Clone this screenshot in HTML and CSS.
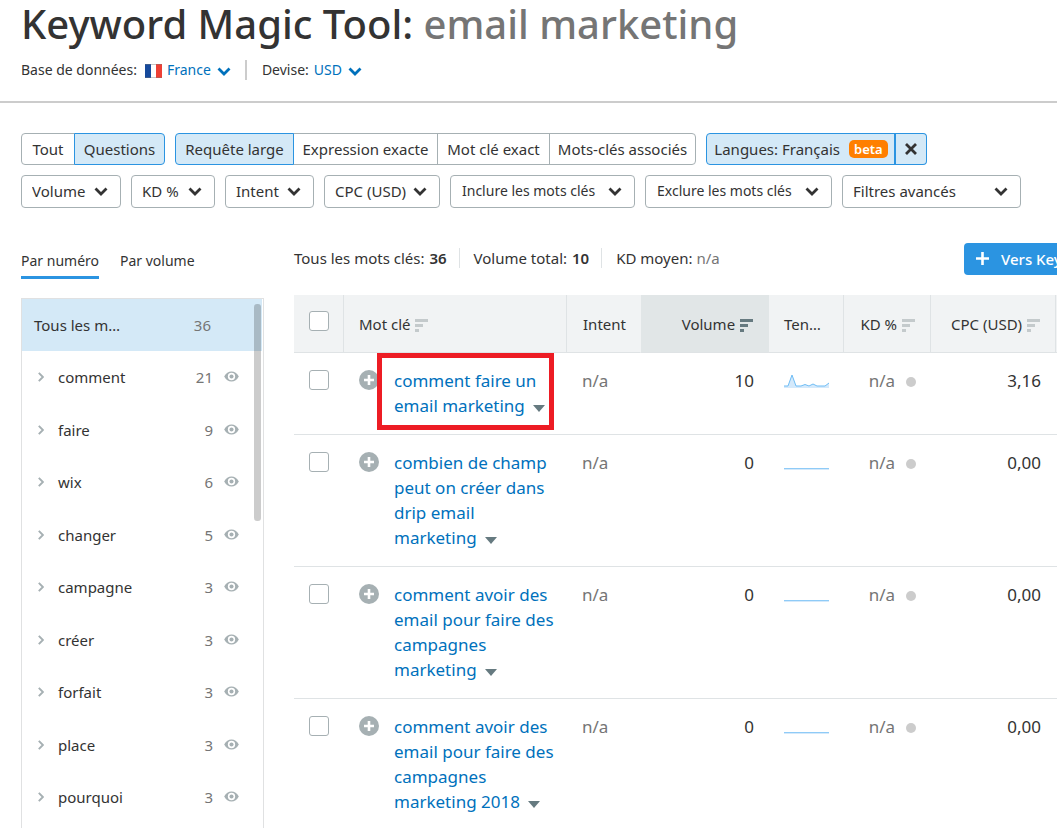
FILE: index.html
```
<!DOCTYPE html>
<html lang="fr">
<head>
<meta charset="utf-8">
<title>Keyword Magic Tool: email marketing</title>
<link rel="stylesheet" href="styles.css">
</head>
<body>
<svg class="defs" aria-hidden="true">
  <symbol id="chevron" viewBox="0 0 14 9"><path d="M1.500 1.500 7 7l5.500-5.500" fill="none" stroke="currentColor" stroke-width="2.800"/></symbol>
  <symbol id="expand" viewBox="0 0 6 10"><path d="M.8.8 4.900 5 .8 9.200" fill="none" stroke="currentColor" stroke-width="1.900"/></symbol>
  <symbol id="eye" viewBox="0 0 16 12"><path fill="currentColor" fill-rule="evenodd" d="M0 6Q3 .5 8 .5T16 6Q13 11.500 8 11.500T0 6ZM8 2a4 4 0 1 0 0 8 4 4 0 0 0 0-8Z"/><circle cx="8" cy="6" r="2.200" fill="currentColor"/></symbol>
  <symbol id="sort" viewBox="0 0 13 13"><path fill="currentColor" d="M0 0h13v3H0zM0 5h8v3H0zM0 10h4v3H0z"/></symbol>
  <symbol id="add" viewBox="0 0 20 20"><circle cx="10" cy="10" r="10" fill="#a6b0b3"/><path d="M10 5v10M5 10h10" stroke="#fff" stroke-width="2.600"/></symbol>
  <symbol id="caret" viewBox="0 0 12 7"><path d="M0 0h12L6 7z" fill="#667a80"/></symbol>
  <symbol id="flat" viewBox="0 0 45 14"><path d="M0 12h45v2H0z" fill="#d4e9fb"/><path d="M0 12.500h45" stroke="#8fcbf7"/></symbol>
</svg>

<header class="header">
  <h1 class="title">Keyword Magic Tool: <span class="query">email marketing</span></h1>
  <div class="meta">
    <span>Base de données:</span>
    <svg class="flag" viewBox="0 0 17 14"><path fill="#164a9c" d="M0 0h6v14H0z"/><path fill="#fff" d="M6 0h5v14H6z"/><path fill="#ee4035" d="M11 0h6v14h-6z"/><path d="M0 .5h17M0 13.500h17" stroke="#777" stroke-opacity=".4"/></svg>
    <button class="pick">France <svg class="chevron"><use href="#chevron"/></svg></button>
    <span class="meta-next">Devise:</span>
    <button class="pick">USD <svg class="chevron"><use href="#chevron"/></svg></button>
  </div>
</header>

<main class="page">
  <div class="filters">
    <div class="group">
      <button class="seg seg-all">Tout</button><button class="seg seg-questions is-on">Questions</button>
    </div>
    <div class="group">
      <button class="seg seg-broad is-on">Requête large</button><button class="seg seg-phrase">Expression exacte</button><button class="seg seg-exact">Mot clé exact</button><button class="seg seg-related">Mots-clés associés</button>
    </div>
    <div class="group">
      <button class="seg seg-lang is-on">Langues: Français <span class="beta">beta</span></button><button class="seg seg-close is-on" aria-label="Supprimer"><svg class="cross" viewBox="0 0 12 12"><path d="m1 1 10 10M11 1 1 11" stroke="currentColor" stroke-width="2.800"/></svg></button>
    </div>
  </div>
  <div class="filters">
    <label class="drop drop-volume"><select aria-label="Volume"><option>Volume</option></select><svg class="chevron"><use href="#chevron"/></svg></label>
    <label class="drop drop-kd"><select aria-label="KD %"><option>KD %</option></select><svg class="chevron"><use href="#chevron"/></svg></label>
    <label class="drop drop-intent"><select aria-label="Intent"><option>Intent</option></select><svg class="chevron"><use href="#chevron"/></svg></label>
    <label class="drop drop-cpc"><select aria-label="CPC (USD)"><option>CPC (USD)</option></select><svg class="chevron"><use href="#chevron"/></svg></label>
    <label class="drop drop-include"><select aria-label="Inclure les mots clés"><option>Inclure les mots clés</option></select><svg class="chevron"><use href="#chevron"/></svg></label>
    <label class="drop drop-exclude"><select aria-label="Exclure les mots clés"><option>Exclure les mots clés</option></select><svg class="chevron"><use href="#chevron"/></svg></label>
    <label class="drop drop-more"><select aria-label="Filtres avancés"><option>Filtres avancés</option></select><svg class="chevron"><use href="#chevron"/></svg></label>
  </div>

  <div class="content">
    <aside class="side">
      <div class="tabs"><button class="tab is-current">Par numéro</button><button class="tab">Par volume</button></div>
      <div class="panel">
        <div class="scrollbar"></div>
        <div class="total"><span>Tous les m…</span><span class="count">36</span></div>
        <ul class="list">
          <li class="item"><svg class="expand"><use href="#expand"/></svg><span>comment</span><span class="count">21</span><svg class="eye"><use href="#eye"/></svg></li>
          <li class="item"><svg class="expand"><use href="#expand"/></svg><span>faire</span><span class="count">9</span><svg class="eye"><use href="#eye"/></svg></li>
          <li class="item"><svg class="expand"><use href="#expand"/></svg><span>wix</span><span class="count">6</span><svg class="eye"><use href="#eye"/></svg></li>
          <li class="item"><svg class="expand"><use href="#expand"/></svg><span>changer</span><span class="count">5</span><svg class="eye"><use href="#eye"/></svg></li>
          <li class="item"><svg class="expand"><use href="#expand"/></svg><span>campagne</span><span class="count">3</span><svg class="eye"><use href="#eye"/></svg></li>
          <li class="item"><svg class="expand"><use href="#expand"/></svg><span>créer</span><span class="count">3</span><svg class="eye"><use href="#eye"/></svg></li>
          <li class="item"><svg class="expand"><use href="#expand"/></svg><span>forfait</span><span class="count">3</span><svg class="eye"><use href="#eye"/></svg></li>
          <li class="item"><svg class="expand"><use href="#expand"/></svg><span>place</span><span class="count">3</span><svg class="eye"><use href="#eye"/></svg></li>
          <li class="item"><svg class="expand"><use href="#expand"/></svg><span>pourquoi</span><span class="count">3</span><svg class="eye"><use href="#eye"/></svg></li>
        </ul>
      </div>
    </aside>

    <section class="results">
      <div class="summary">
        <div class="stats">
          <span class="stat">Tous les mots clés: <b>36</b></span>
          <span class="stat">Volume total: <b>10</b></span>
          <span class="stat">KD moyen: <span class="muted">n/a</span></span>
        </div>
        <button class="send"><svg class="plus" viewBox="0 0 13 13"><path d="M6.500 0v13M0 6.500h13" stroke="currentColor" stroke-width="2.600"/></svg>Vers Keyword Manager</button>
      </div>
      <table class="table">
        <colgroup><col class="c-check"><col class="c-key"><col class="c-intent"><col class="c-volume"><col class="c-trend"><col class="c-kd"><col class="c-cpc"><col class="c-more"></colgroup>
        <thead>
          <tr>
            <th><input type="checkbox" class="check" aria-label="Tout sélectionner"></th>
            <th>Mot clé <svg class="sort"><use href="#sort"/></svg></th>
            <th class="center">Intent</th>
            <th class="right sorted">Volume <svg class="sort"><use href="#sort"/></svg></th>
            <th>Ten…</th>
            <th class="right tight">KD % <svg class="sort"><use href="#sort"/></svg></th>
            <th class="right">CPC (USD) <svg class="sort"><use href="#sort"/></svg></th>
            <th></th>
          </tr>
        </thead>
        <tbody>
          <tr>
            <td><input type="checkbox" class="check" aria-label="comment faire un email marketing"></td>
            <td class="key-cell"><div class="key"><svg class="add"><use href="#add"/></svg><a href="#" class="link">comment faire un email marketing<svg class="caret"><use href="#caret"/></svg></a></div><div class="frame"></div></td>
            <td class="muted">n/a</td><td class="right">10</td>
            <td><svg class="trend" viewBox="0 0 45 14"><path d="M0 12h4L8 1l4 11h5l4-1.500L25 12l4-2 4 2h8l4-3v5H0z" fill="#d4e9fb"/><path d="M0 12h4L8 1l4 11h5l4-1.500L25 12l4-2 4 2h8l4-3" fill="none" stroke="#6fbdf5"/></svg></td>
            <td class="right muted tight">n/a<span class="dot"></span></td><td class="right">3,16</td><td></td>
          </tr>
          <tr>
            <td><input type="checkbox" class="check" aria-label="combien de champ peut on créer dans drip email marketing"></td>
            <td><div class="key"><svg class="add"><use href="#add"/></svg><a href="#" class="link">combien de champ peut on créer dans drip email marketing<svg class="caret"><use href="#caret"/></svg></a></div></td>
            <td class="muted">n/a</td><td class="right">0</td><td><svg class="trend"><use href="#flat"/></svg></td>
            <td class="right muted tight">n/a<span class="dot"></span></td><td class="right">0,00</td><td></td>
          </tr>
          <tr>
            <td><input type="checkbox" class="check" aria-label="comment avoir des email pour faire des campagnes marketing"></td>
            <td><div class="key"><svg class="add"><use href="#add"/></svg><a href="#" class="link">comment avoir des email pour faire des campagnes marketing<svg class="caret"><use href="#caret"/></svg></a></div></td>
            <td class="muted">n/a</td><td class="right">0</td><td><svg class="trend"><use href="#flat"/></svg></td>
            <td class="right muted tight">n/a<span class="dot"></span></td><td class="right">0,00</td><td></td>
          </tr>
          <tr>
            <td><input type="checkbox" class="check" aria-label="comment avoir des email pour faire des campagnes marketing 2018"></td>
            <td><div class="key"><svg class="add"><use href="#add"/></svg><a href="#" class="link">comment avoir des email pour faire des campagnes marketing 2018<svg class="caret"><use href="#caret"/></svg></a></div></td>
            <td class="muted">n/a</td><td class="right">0</td><td><svg class="trend"><use href="#flat"/></svg></td>
            <td class="right muted tight">n/a<span class="dot"></span></td><td class="right">0,00</td><td></td>
          </tr>
        </tbody>
      </table>
    </section>
  </div>
</main>
</body>
</html>
```
FILE: styles.css
```
* { box-sizing: border-box; }
html { overflow: hidden; }
body {
  margin: 0;
  background: #fff;
  color: #333;
  font: 15px/20px "Noto Sans", "Open Sans", sans-serif;
}
button, select { font: inherit; color: inherit; margin: 0; }
button { border: 0; padding: 0; background: none; cursor: pointer; white-space: nowrap; }
svg { flex: none; }
.defs { display: none; }
.muted { color: #757575; }
.right { text-align: right; }
.center { text-align: center; }

.header { padding: 0 21px 21px; border-bottom: 2px solid #ccc; }
.title { margin: 0; font-size: 40px; line-height: 48px; font-weight: 500; white-space: nowrap; }
.query { color: #757575; }
.meta { display: flex; align-items: center; height: 20px; margin-top: 12px; font-size: 14px; white-space: nowrap; }
.flag { width: 17px; height: 14px; margin: 1px 5px 0 8px; }
.pick { color: #0071bc; display: flex; align-items: center; gap: 6px; }
.chevron { width: 14px; height: 9px; }
.pick .chevron { margin-top: 3px; }
.meta-next { margin: 0 5px 0 14px; padding-left: 15px; border-left: 2px solid #ccc; }

.page { padding: 30px 0 0 21px; }
.filters { display: flex; gap: 10px; margin-bottom: 10px; }
.group { display: flex; }
.seg {
  height: 32px;
  padding-bottom: 1px;
  border: 1px solid #a6b0b3;
  display: flex;
  align-items: center;
  justify-content: center;
  margin-left: -1px;
}
.seg:first-child { border-radius: 4px 0 0 4px; margin-left: 0; }
.seg:last-child { border-radius: 0 4px 4px 0; }
.seg.is-on { background: #d4e9f7; border-color: #2b94e1; z-index: 1; }
.seg-all { width: 54px; }
.seg-questions { width: 91px; }
.seg-broad { width: 119px; }
.seg-phrase { width: 145px; }
.seg-exact { width: 113px; }
.seg-related { width: 147px; }
.seg-lang { width: 190px; gap: 9px; }
.seg.seg-close { width: 33px; margin-left: -1px; border-left-width: 2px; margin-left: -2px; }
.cross { width: 12px; height: 12px; }
.beta { background: #ff7f00; color: #fff; font-weight: 600; font-size: 13px; line-height: 18px; border-radius: 5px; padding: 0 5px; }

.drop { display: grid; align-items: center; }
.drop select {
  grid-area: 1 / 1;
  width: 100%;
  height: 33px;
  padding: 0 0 2px 10px;
  border: 1px solid #a6b0b3;
  border-radius: 4px;
  background: #fff;
  appearance: none;
}
.drop .chevron { grid-area: 1 / 1; justify-self: end; margin-right: 13px; pointer-events: none; }
.drop-volume { width: 100px; }
.drop-kd { width: 84px; }
.drop-intent { width: 89px; }
.drop-cpc { width: 116px; }
.drop-include { width: 185px; }
.drop-exclude { width: 187px; }
.drop-more { width: 179px; }
.drop-include select, .drop-exclude select { font-size: 14px; padding-left: 11px; }

.content { display: flex; align-items: flex-start; gap: 30px; padding-top: 25px; }
.side { flex: none; width: 243px; padding-top: 8px; }
.tabs { display: flex; gap: 21px; font-size: 14px; }
.tab { padding: 0 0 6px; height: 28px; border-bottom: 3px solid transparent; }
.tab.is-current { border-color: #2b94e1; }
.panel { position: relative; margin-top: 19px; border: 1px solid #e0e1e2; padding-bottom: 32px; }
.scrollbar { position: absolute; top: 5px; right: 2px; width: 7px; height: 217px; border-radius: 3px; background: rgba(0, 0, 0, .2); }
.total { display: flex; justify-content: space-between; align-items: center; height: 52px; margin-right: 1px; padding: 0 51px 0 12px; background: #d4e9f7; }
.count { color: #757575; }
.list { list-style: none; margin: 0; padding: 0; }
.item { display: flex; align-items: center; height: 53px; padding: 0 24px 1px 16px; }
.item:nth-child(even) { height: 52px; }
.item .count { margin-left: auto; }
.expand { width: 6px; height: 10px; margin-right: 14px; color: #a6b0b3; }
.eye { width: 15px; height: 11px; margin: 0 0 1px 11px; color: #a6b0b3; }

.results { flex: 1; min-width: 0; }
.summary { display: flex; height: 32px; margin-bottom: 20px; }
.stats { display: flex; align-items: center; flex: none; width: 670px; padding-bottom: 2px; white-space: nowrap; }
.stat + .stat { margin-left: 12px; padding-left: 14px; border-left: 1px solid #dfe3e5; }
.stat b { margin-left: 1px; font-weight: 600; }
.send { display: flex; align-items: center; gap: 12px; flex: none; padding: 0 12px 1px; border-radius: 4px; background: #2b94e1; color: #fff; font-weight: 500; }
.plus { width: 13px; height: 13px; }

.table { table-layout: fixed; width: 860px; border-collapse: separate; border-spacing: 0; }
.c-check { width: 50px; }
.c-key { width: 223px; }
.c-intent { width: 74px; }
.c-volume { width: 128px; }
.c-trend { width: 75px; }
.c-kd { width: 87px; }
.c-cpc { width: 125px; }
th {
  height: 58px;
  padding: 1px 15px 0;
  background: #f1f3f4;
  border-right: 1px solid #dfe3e5;
  border-bottom: 1px solid #dfe3e5;
  font-weight: 400;
  text-align: left;
  white-space: nowrap;
}
th.center { text-align: center; padding: 0 0 0 2px; }
th.right { text-align: right; }
th.sorted { background: #e1e6e7; border-right-color: #e1e6e7; }
th:nth-child(3) { border-right-color: #f1f3f4; }
.sort { width: 13px; height: 13px; margin-left: 1px; color: #c4cacc; vertical-align: -2px; }
.sorted .sort { color: #667a80; }
td { padding: 15px 15px 16px; border-bottom: 1px solid #dfe3e5; vertical-align: top; font-size: 17px; line-height: 25px; }
.check { appearance: none; display: block; width: 20px; height: 20px; margin: 0; border: 1px solid #a6b0b3; border-radius: 3px; background: #fff; }
th .check { margin-bottom: 6px; }
td .check { margin-top: 2px; }
.key { display: flex; gap: 15px; }
.add { width: 20px; height: 20px; margin-top: 2px; }
.link { color: #0071bc; text-decoration: none; width: 161px; flex: none; }
.caret { width: 12px; height: 7px; margin-left: 8px; }
.key-cell { position: relative; }
.frame { position: absolute; top: 0; left: 33px; width: 177px; height: 77px; border: 5px solid #ed1c24; pointer-events: none; }
.trend { display: block; width: 45px; height: 14px; margin-top: 6px; }
.dot { display: inline-block; width: 10px; height: 10px; margin-left: 11px; border-radius: 50%; background: #ccc; }
td.tight.right { padding-right: 15px; }
```
